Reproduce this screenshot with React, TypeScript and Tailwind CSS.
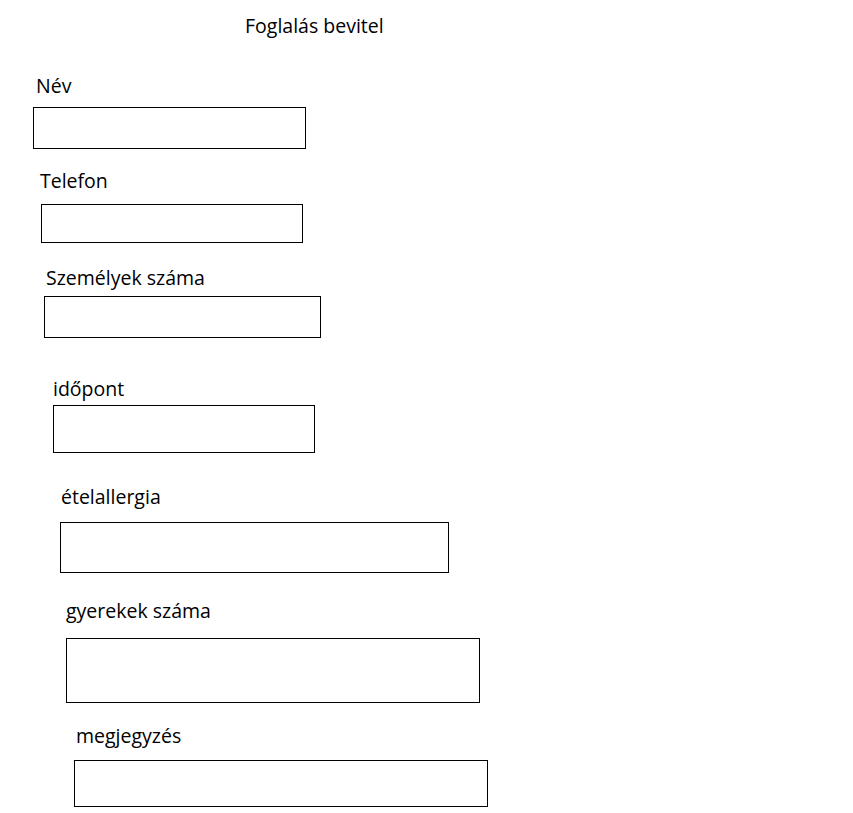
const fields = [
  { label: 'Név', labelMt: 'mt-[40px]', labelMl: 'ml-[36px]', boxMt: 'mt-[11px]', boxMl: 'ml-[33px]', box: 'w-[273px] h-[42px]' },
  { label: 'Telefon', labelMt: 'mt-[22px]', labelMl: 'ml-[40px]', boxMt: 'mt-[13px]', boxMl: 'ml-[41px]', box: 'w-[262px] h-[39px]' },
  { label: 'Személyek száma', labelMt: 'mt-[25px]', labelMl: 'ml-[46px]', boxMt: 'mt-[8px]', boxMl: 'ml-[44px]', box: 'w-[277px] h-[42px]' },
  { label: 'időpont', labelMt: 'mt-[41px]', labelMl: 'ml-[53px]', boxMt: 'mt-[6px]', boxMl: 'ml-[53px]', box: 'w-[262px] h-[48px]' },
  { label: 'ételallergia', labelMt: 'mt-[34px]', labelMl: 'ml-[61px]', boxMt: 'mt-[15px]', boxMl: 'ml-[60px]', box: 'w-[389px] h-[51px]' },
  { label: 'gyerekek száma', labelMt: 'mt-[28px]', labelMl: 'ml-[66px]', boxMt: 'mt-[17px]', boxMl: 'ml-[66px]', box: 'w-[414px] h-[65px]' },
  { label: 'megjegyzés', labelMt: 'mt-[23px]', labelMl: 'ml-[76px]', boxMt: 'mt-[14px]', boxMl: 'ml-[74px]', box: 'w-[414px] h-[47px]' },
]

export default function App() {
  return (
    <div className="min-h-screen bg-white text-black font-['Open_Sans',sans-serif] text-[19.5px] leading-[20px]">
      <div className="flex flex-col items-start pt-[16px]">
        <h1 className="ml-[245px] font-normal">Foglalás bevitel</h1>
        {fields.map((f) => (
          <div key={f.label} className="flex flex-col items-start">
            <label className={`${f.labelMt} ${f.labelMl}`}>{f.label}</label>
            <input
              type="text"
              className={`${f.boxMt} ${f.boxMl} ${f.box} border border-black bg-white outline-none`}
            />
          </div>
        ))}
      </div>
    </div>
  )
}
